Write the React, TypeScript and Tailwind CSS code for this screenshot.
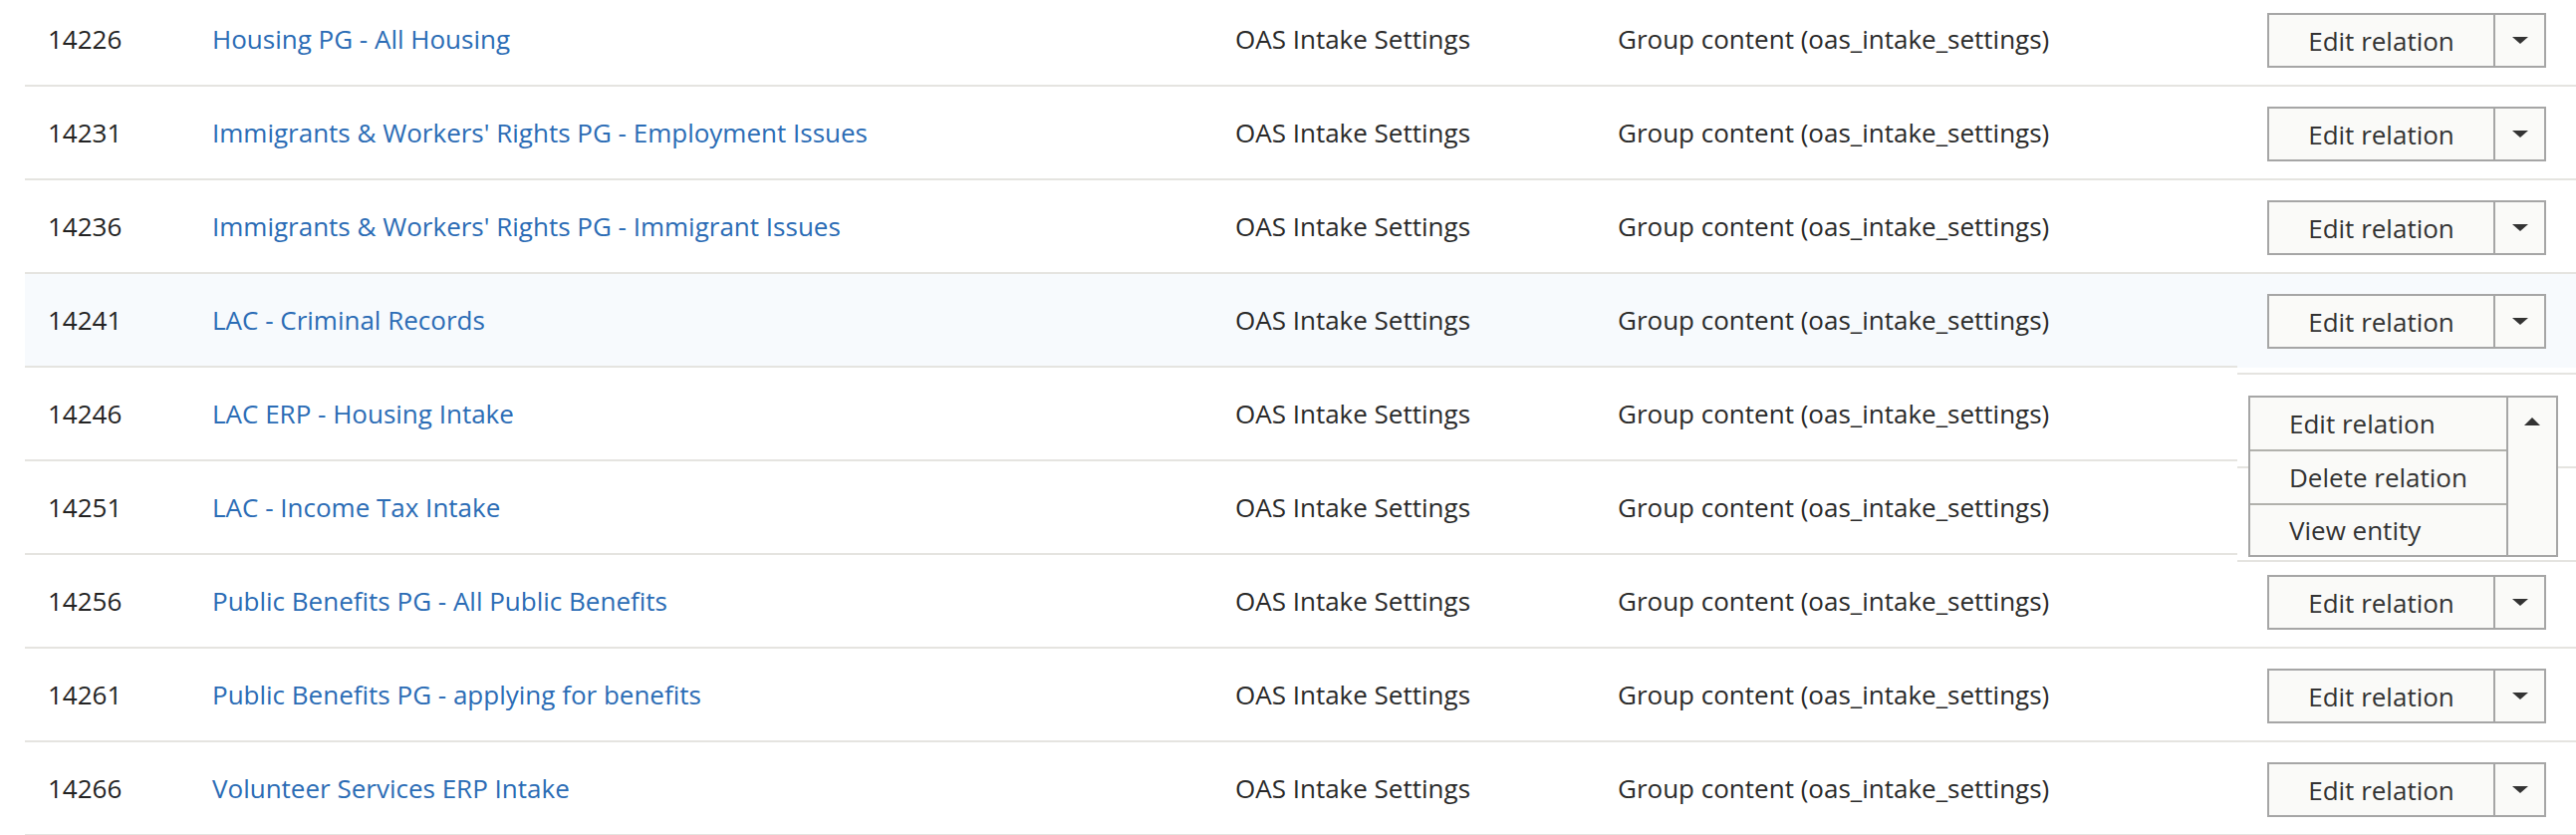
import React from "react";

type Row = { id: string; title: string };

const rows: Row[] = [
  { id: "14226", title: "Housing PG - All Housing" },
  { id: "14231", title: "Immigrants & Workers' Rights PG - Employment Issues" },
  { id: "14236", title: "Immigrants & Workers' Rights PG - Immigrant Issues" },
  { id: "14241", title: "LAC - Criminal Records" },
  { id: "14246", title: "LAC ERP - Housing Intake" },
  { id: "14251", title: "LAC - Income Tax Intake" },
  { id: "14256", title: "Public Benefits PG - All Public Benefits" },
  { id: "14261", title: "Public Benefits PG - applying for benefits" },
  { id: "14266", title: "Volunteer Services ERP Intake" },
];

function CaretDown() {
  return <span className="block h-0 w-0 border-x-[8px] border-t-[7px] border-x-transparent border-t-[#333333]" />;
}

function CaretUp() {
  return <span className="block h-0 w-0 border-x-[8px] border-b-[8px] border-x-transparent border-b-[#333333]" />;
}

function DropButton() {
  return (
    <div className="flex h-[55px] w-[280px] border-2 border-[#a6a6a6] bg-[#fafaf8]">
      <div className="flex flex-1 items-center justify-center border-r-2 border-[#a6a6a6] text-[#333333]">
        Edit relation
      </div>
      <div className="flex w-[49px] items-center justify-center">
        <CaretDown />
      </div>
    </div>
  );
}

function OpenDropButton() {
  return (
    <div className="absolute left-[11px] top-[28px] z-10 flex w-[311px] border-2 border-[#a6a6a6] bg-[#fafaf8] text-[#333333]">
      <ul className="flex-1 border-r-2 border-[#a6a6a6]">
        <li className="flex h-[54px] items-center border-b-2 border-[#b1b1ac] pl-[39px]">Edit relation</li>
        <li className="flex h-[54px] items-center border-b-2 border-[#b1b1ac] pl-[39px]">Delete relation</li>
        <li className="flex h-[50px] items-center pl-[39px]">View entity</li>
      </ul>
      <div className="flex w-[48px] justify-center pt-[20px]">
        <CaretUp />
      </div>
    </div>
  );
}

export default function App() {
  return (
    <div className="h-[838px] w-full overflow-hidden bg-white pl-[25px] font-['Open_Sans',_'Noto_Sans',_sans-serif] text-[26px] leading-[36px]">
      <div className="-mt-[7px] flex flex-col">
        {rows.map((r, i) => {
          const highlight = i === 3;
          const shifted = i >= 3 && i <= 5;
          const open = i === 4;
          const covered = i === 5;
          return (
            <div key={r.id} className={`flex h-[94px] ${highlight ? "bg-[#f7fafd]" : ""}`}>
              <div className="flex w-[165px] items-center border-b-2 border-[#e5e4e0] pl-[23px] text-[#232323]">
                {r.id}
              </div>
              <div className="flex w-[1027px] items-center border-b-2 border-[#e5e4e0] pl-[23px]">
                <a href="#" className="text-[#2b6cb5] no-underline">
                  {r.title}
                </a>
              </div>
              <div className="flex w-[384px] items-center border-b-2 border-[#e5e4e0] pl-[23px] text-[#2a2a2a]">
                OAS Intake Settings
              </div>
              <div className="flex w-[645px] items-center border-b-2 border-[#e5e4e0] pl-[23px] text-[#2a2a2a]">
                Group content (oas_intake_settings)
              </div>
              <div
                className={`relative flex flex-1 items-start border-b-2 border-[#e5e4e0] pl-[30px] pt-[20px] ${
                  shifted ? "-mb-[7px]" : ""
                }`}
              >
                {open ? <OpenDropButton /> : covered ? null : <DropButton />}
              </div>
            </div>
          );
        })}
      </div>
    </div>
  );
}
